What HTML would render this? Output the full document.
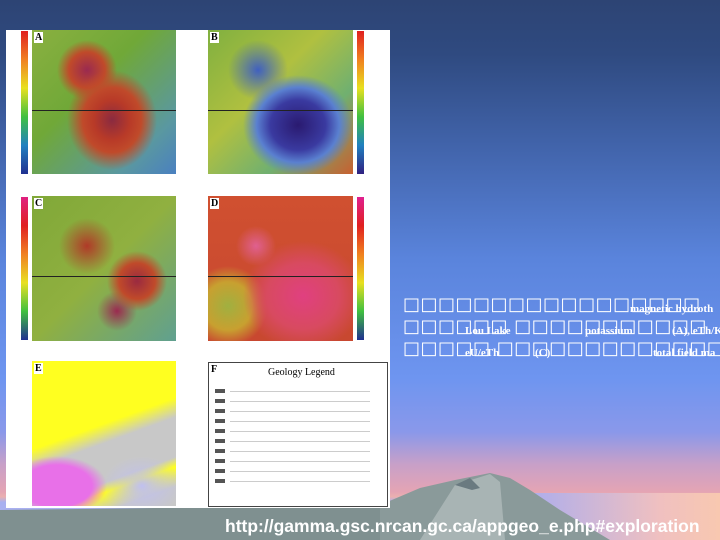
<!DOCTYPE html>
<html><head><meta charset="utf-8"><style>
body{margin:0;width:720px;height:540px;overflow:hidden;position:relative;font-family:"Liberation Sans",sans-serif;
background:linear-gradient(to bottom,#2d4474 0%,#2f4a80 10%,#4062a8 26%,#5a84dc 48%,#6e95f0 70%,#8a98ea 80%,#c8a0c8 86%,#e4a4b4 91%,#eab0b0 92%,#a8b0f0 93%,#b0b4f0 100%);}
.hz{position:absolute;left:520px;top:493px;width:200px;height:47px;background:linear-gradient(to right,#a8acf0,#f0c0c0 70%,#f8c8b0);}
.p{position:absolute;background:#fff;}
.m{position:absolute;}
.cb{position:absolute;width:7px;}
.t{position:absolute;color:#fff;font-size:18px;white-space:nowrap;letter-spacing:0.5px;font-family:"DejaVu Sans",sans-serif}
.s{position:absolute;color:#fff;font-family:"Liberation Serif",serif;font-size:11px;font-weight:bold;white-space:nowrap}
.lbl{position:absolute;font:bold 10px "Liberation Serif",serif;background:#fff;padding:0 1px;color:#000}
.ln{position:absolute;height:1px;background:#222}
</style></head><body>
<div class="hz"></div>
<svg style="position:absolute;left:0;top:0" width="720" height="540">
<polygon points="380,505 420,488 455,480 490,473 510,478 530,490 560,510 610,540 380,540" fill="#8a9a9a"/>
<polygon points="420,540 455,485 490,474 500,482 505,540" fill="#a8b4b4"/>
<polygon points="455,485 470,478 480,488 472,490" fill="#6a7a80"/>
<polygon points="0,510 380,505 380,540 0,540" fill="#7f9090"/>
</svg>
<div class="p" style="left:6px;top:30px;width:384px;height:478px"></div>
<div class="cb" style="left:21px;top:31px;height:143px;background:linear-gradient(#e02020,#f08020,#e8e020,#40c040,#2080c0,#203090)"></div>
<div class="cb" style="left:357px;top:31px;height:143px;background:linear-gradient(#e02020,#f08020,#e8e020,#40c040,#2080c0,#302080)"></div>
<div class="cb" style="left:21px;top:197px;height:143px;background:linear-gradient(#e02080,#e02020,#f08020,#e8e020,#40c040,#203090)"></div>
<div class="cb" style="left:357px;top:197px;height:143px;background:linear-gradient(#e02090,#e02020,#f08020,#e8e020,#40c040,#203090)"></div>
<div class="m" style="left:32px;top:30px;width:144px;height:144px;background:radial-gradient(ellipse 45px 50px at 80px 90px,#8a2a40,#b83a28 40%,#c04a2a 65%,transparent 100%),radial-gradient(circle 30px at 55px 40px,#9a2a50,#c04a2a 60%,transparent 100%),linear-gradient(135deg,#8ab040,#70a838 40%,#5a98a0 80%,#4a80c0)"></div>
<div class="m" style="left:208px;top:30px;width:145px;height:144px;background:radial-gradient(ellipse 55px 50px at 90px 95px,#2a1a70,#3a3aa0 50%,#5a80d0 75%,transparent 100%),radial-gradient(circle 30px at 50px 40px,#4060c0,transparent 100%),linear-gradient(135deg,#80b040,#b0c040 40%,#70b070 70%,#c86030)"></div>
<div class="m" style="left:32px;top:196px;width:144px;height:145px;background:radial-gradient(circle 30px at 105px 85px,#9a2a40,#c04a2a 60%,transparent 100%),radial-gradient(circle 28px at 55px 50px,#b03a28,transparent 100%),radial-gradient(circle 20px at 85px 115px,#9a2a50,transparent 100%),linear-gradient(135deg,#80a838,#90b040 50%,#60a090)"></div>
<div class="m" style="left:208px;top:196px;width:145px;height:145px;background:radial-gradient(ellipse 60px 55px at 95px 100px,#e04080,#d84a60 60%,transparent 100%),radial-gradient(circle 20px at 48px 50px,#e06090,transparent 100%),radial-gradient(ellipse 40px 40px at 20px 110px,#a0b040,#c8a030 60%,transparent 100%),linear-gradient(#d05030,#c84830)"></div>
<div class="m" style="left:32px;top:361px;width:144px;height:145px;background:radial-gradient(ellipse 40px 30px at 110px 125px,#c0c0f0,transparent 100%),radial-gradient(ellipse 50px 30px at 25px 125px,#e870e8,#e870e8 70%,transparent 100%),linear-gradient(160deg,#ffff20 0%,#ffff20 45%,#c8c8c8 55%,#c8c8c8 75%,#ffff20 80%,#c8c8c8 90%);"></div>
<div class="m" style="left:208px;top:362px;width:180px;height:145px;border:1px solid #444;box-sizing:border-box;background:#fff"></div>
<div style="position:absolute;left:268px;top:367px;font:10px 'Liberation Serif',serif">Geology Legend</div>
<div style="position:absolute;left:215px;top:389px;width:10px;height:100px;background:repeating-linear-gradient(#555 0 4px,#fff 4px 10px)"></div>
<div style="position:absolute;left:230px;top:391px;width:140px;height:100px;background:repeating-linear-gradient(#ccc 0 1px,#fff 1px 10px)"></div>
<div class="ln" style="left:32px;top:110px;width:144px"></div>
<div class="ln" style="left:208px;top:110px;width:145px"></div>
<div class="ln" style="left:32px;top:276px;width:144px"></div>
<div class="ln" style="left:208px;top:276px;width:145px"></div>
<div class="lbl" style="left:34px;top:32px">A</div>
<div class="lbl" style="left:210px;top:32px">B</div>
<div class="lbl" style="left:34px;top:198px">C</div>
<div class="lbl" style="left:210px;top:198px">D</div>
<div class="lbl" style="left:34px;top:363px">E</div>
<div class="lbl" style="left:210px;top:364px">F</div>
<div class="t" style="left:403px;top:294px">□□□□□□□□□□□□□□□□□</div>
<div class="s" style="left:630px;top:303px">magnetic hydroth</div>
<div class="t" style="left:403px;top:316px">□□□□□□ □□□□□□□□□□□</div>
<div class="s" style="left:465px;top:325px">Lou Lake</div>
<div class="s" style="left:585px;top:325px">potassium</div>
<div class="s" style="left:672px;top:325px">(A), eTh/K</div>
<div class="t" style="left:403px;top:338px">□□□□□ □□□□□□□□□□□□□</div>
<div class="s" style="left:465px;top:347px">eU/eTh</div>
<div class="s" style="left:535px;top:347px">(C)</div>
<div class="s" style="left:653px;top:347px">total field ma</div>
<div style="position:absolute;left:225px;top:516px;color:#fff;font-weight:bold;font-size:17.5px;white-space:nowrap">http://gamma.gsc.nrcan.gc.ca/appgeo_e.php#exploration</div>
</body></html>
